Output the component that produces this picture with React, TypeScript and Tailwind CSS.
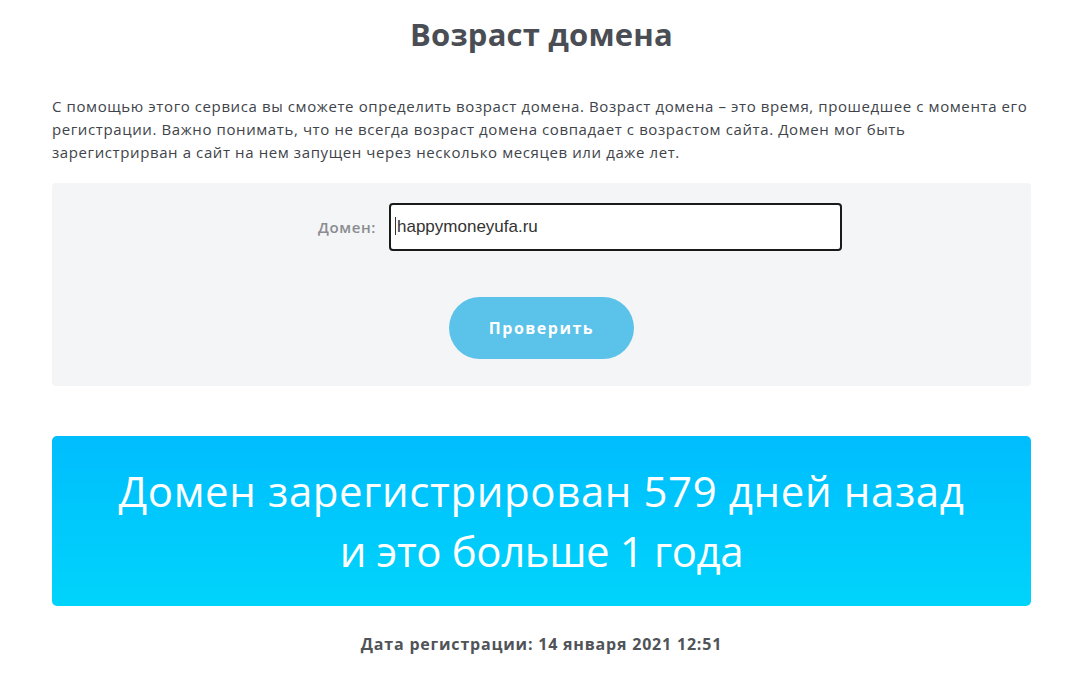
export default function App() {
  return (
    <div className="min-h-[677px] w-full bg-white" style={{ fontFamily: '"Open Sans", "Noto Sans", sans-serif' }}>
      <div className="ml-[52px] w-[979px] pt-[14px]">
        <h1 className="text-center text-[31px] font-bold leading-[40px] tracking-[0.2px] text-[#4a4e54]">Возраст домена</h1>
        <p className="mt-[41px] text-[15px] leading-[23px] tracking-[0.6px] text-[#40444a]">
          <span className="whitespace-nowrap">С помощью этого сервиса вы сможете определить возраст домена. Возраст домена – это время, прошедшее с момента его</span>
          <br />
          <span className="whitespace-nowrap">регистрации. Важно понимать, что не всегда возраст домена совпадает с возрастом сайта. Домен мог быть</span>
          <br />
          <span className="whitespace-nowrap">зарегистрирван а сайт на нем запущен через несколько месяцев или даже лет.</span>
        </p>
        <div className="mt-[19px] flex h-[203px] flex-col rounded-[4px] bg-[#f3f5f7] pt-[20px]">
          <div className="flex items-center">
            <label className="w-[324px] text-right text-[15px] font-semibold tracking-[0.6px] text-[#8a8c8f]">Домен:</label>
            <div className="ml-[13px] flex h-[48px] w-[453px] items-center rounded-[4px] border-2 border-[#1a1a1a] bg-white pl-[4px]">
              <span className="text-[17px] text-[#333]" style={{ fontFamily: '"Liberation Sans", Arial, sans-serif' }}>
                <span className="mr-[1px] inline-block h-[18px] w-[1px] translate-y-[3px] bg-[#333]"></span>happymoneyufa.ru
              </span>
            </div>
          </div>
          <button className="mx-auto mt-[46px] h-[62px] w-[185px] rounded-full bg-[#5bc2ea] text-[16px] font-bold tracking-[1.5px] text-white">Проверить</button>
        </div>
        <div className="mt-[50px] flex h-[170px] flex-col items-center justify-center rounded-[5px] bg-gradient-to-b from-[#00bdfd] to-[#00d4fb] text-center text-[42px] font-normal leading-[60px] text-white">
          <div className="tracking-[0.6px]">Домен зарегистрирован 579 дней назад</div>
          <div className="tracking-[-0.4px]">и это больше 1 года</div>
        </div>
        <div className="mt-[26px] text-center text-[16px] font-bold tracking-[0.8px] text-[#505358]">Дата регистрации: 14 января 2021 12:51</div>
      </div>
    </div>
  );
}
